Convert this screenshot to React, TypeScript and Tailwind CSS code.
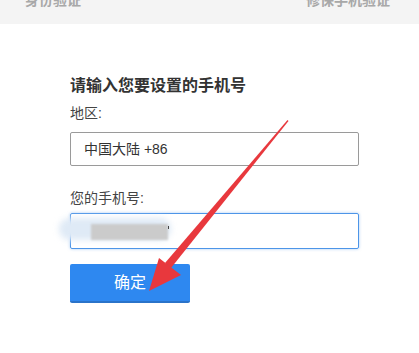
import React from "react";

const font = { fontFamily: '"Liberation Sans", "Noto Sans CJK SC", sans-serif' };

function Arrow() {
  // red annotation arrow drawn over the form
  return (
    <svg
      className="absolute left-0 top-0 pointer-events-none"
      width="419"
      height="353"
      viewBox="0 0 419 353"
    >
      <polygon points="287.5,120 288.5,121 171,268 165,263" fill="#e8383d" />
      <polygon points="149,291 159,258 181,275" fill="#e8383d" />
    </svg>
  );
}

export default function App() {
  return (
    <div className="relative w-[419px] h-[353px] bg-white overflow-hidden" style={font}>
      <div className="h-[24px] bg-[#f4f4f4] flex justify-between overflow-hidden">
        <span className="ml-[25px] -mt-[9px] text-[14px] leading-[18px] font-bold text-[#a8a8a8]">
          身份验证
        </span>
        <span className="mr-[29px] -mt-[9px] text-[14px] leading-[18px] font-bold text-[#a8a8a8]">
          修保手机验证
        </span>
      </div>

      <div className="pl-[70px] pt-[52px] w-[359px] box-content">
        <h2 className="text-[16px] leading-[20px] font-bold text-[#333]">请输入您要设置的手机号</h2>
        <p className="mt-[8px] text-[14px] leading-[18px] text-[#444]">地区:</p>
        <div className="mt-[10px] h-[34px] w-[289px] border border-[#9a9a9a] rounded-[2px] flex items-center pl-[13px] text-[14px] text-[#333]">
          中国大陆 +86
        </div>
        <p className="mt-[23px] text-[14px] leading-[18px] text-[#444]">您的手机号:</p>
        <div className="relative mt-[6px] h-[36px] w-[289px] border border-[#4d95e8] rounded-[2px] shadow-[0_0_3px_rgba(77,149,232,0.5)]">
          <div className="absolute left-[-12px] top-[4px] w-[112px] h-[22px] rounded-full bg-[#dfeaf6] blur-[3px]" />
          <div className="absolute left-[20px] top-[10px] w-[77px] h-[16px] bg-[#cbcbcb] blur-[1px]" />
          <div className="absolute left-[97px] top-[12px] w-[1px] h-[3px] bg-[#444]" />
        </div>
        <button className="mt-[15px] h-[39px] w-[120px] rounded-[2px] bg-[#2e88f0] border-b-2 border-[#2a73c9] text-white text-[16px]">
          确定
        </button>
      </div>
      <Arrow />
    </div>
  );
}
